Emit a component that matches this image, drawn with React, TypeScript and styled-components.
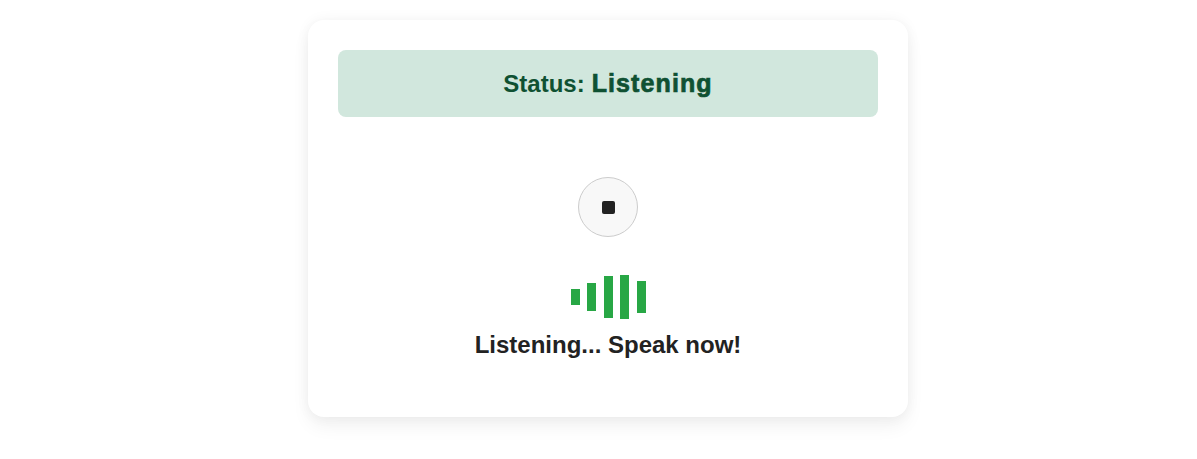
import React from 'react'
import styled, { createGlobalStyle } from 'styled-components'

const barHeights = [16, 28, 42, 44, 32]

const App = () => {
  return (
    <Page>
      <GlobalStyle />
      <Card>
        <Status>
          Status: <StatusValue>Listening</StatusValue>
        </Status>
        <Controls>
          <StopButton aria-label="Stop">
            <StopIcon />
          </StopButton>
        </Controls>
        <Bars>
          {barHeights.map((height, i) => (
            <Bar key={i} $height={height} />
          ))}
        </Bars>
        <Message>Listening... Speak now!</Message>
      </Card>
    </Page>
  )
}

export default App

const GlobalStyle = createGlobalStyle`
body {
  margin: 0;
  background-color: #ffffff;
  font-family: "Liberation Sans", Arial, sans-serif;
}
`

const Page = styled.div`
width: 100%;
height: 459px;
display: flex;
justify-content: center;
padding: 20px 0 0 19px;
box-sizing: border-box;
overflow: hidden;
`

const Card = styled.div`
width: 600px;
height: 397px;
flex-shrink: 0;
box-sizing: border-box;
padding: 30px;
background-color: #ffffff;
border-radius: 16px;
box-shadow: 0 10px 18px rgba(0, 0, 0, 0.05), 0 0 14px rgba(0, 0, 0, 0.05);
display: flex;
flex-direction: column;
align-items: center;
`

const Status = styled.div`
width: 100%;
height: 67px;
display: flex;
justify-content: center;
align-items: center;
gap: 7px;
background-color: #d1e7dd;
border-radius: 8px;
color: #0f5132;
font-size: 24px;
font-weight: 700;
`

const StatusValue = styled.strong`
font-size: 25px;
font-weight: 700;
letter-spacing: 1.1px;
-webkit-text-stroke: 0.7px #0f5132;
`

const Controls = styled.div`
margin-top: 60px;
display: flex;
justify-content: center;
`

const StopButton = styled.button`
width: 60px;
height: 60px;
padding: 0;
display: flex;
align-items: center;
justify-content: center;
background-color: #f8f8f8;
border: 1px solid #cccccc;
border-radius: 50%;
`

const StopIcon = styled.span`
width: 13px;
height: 13px;
background-color: #222222;
border-radius: 2px;
`

const Bars = styled.div`
margin-top: 38px;
height: 44px;
display: flex;
align-items: center;
gap: 7.5px;
`

const Bar = styled.div<{ $height: number }>`
width: 9px;
height: ${(p) => p.$height}px;
background-color: #28a745;
`

const Message = styled.div`
margin-top: 12px;
font-size: 24px;
font-weight: 700;
color: #222222;
`
